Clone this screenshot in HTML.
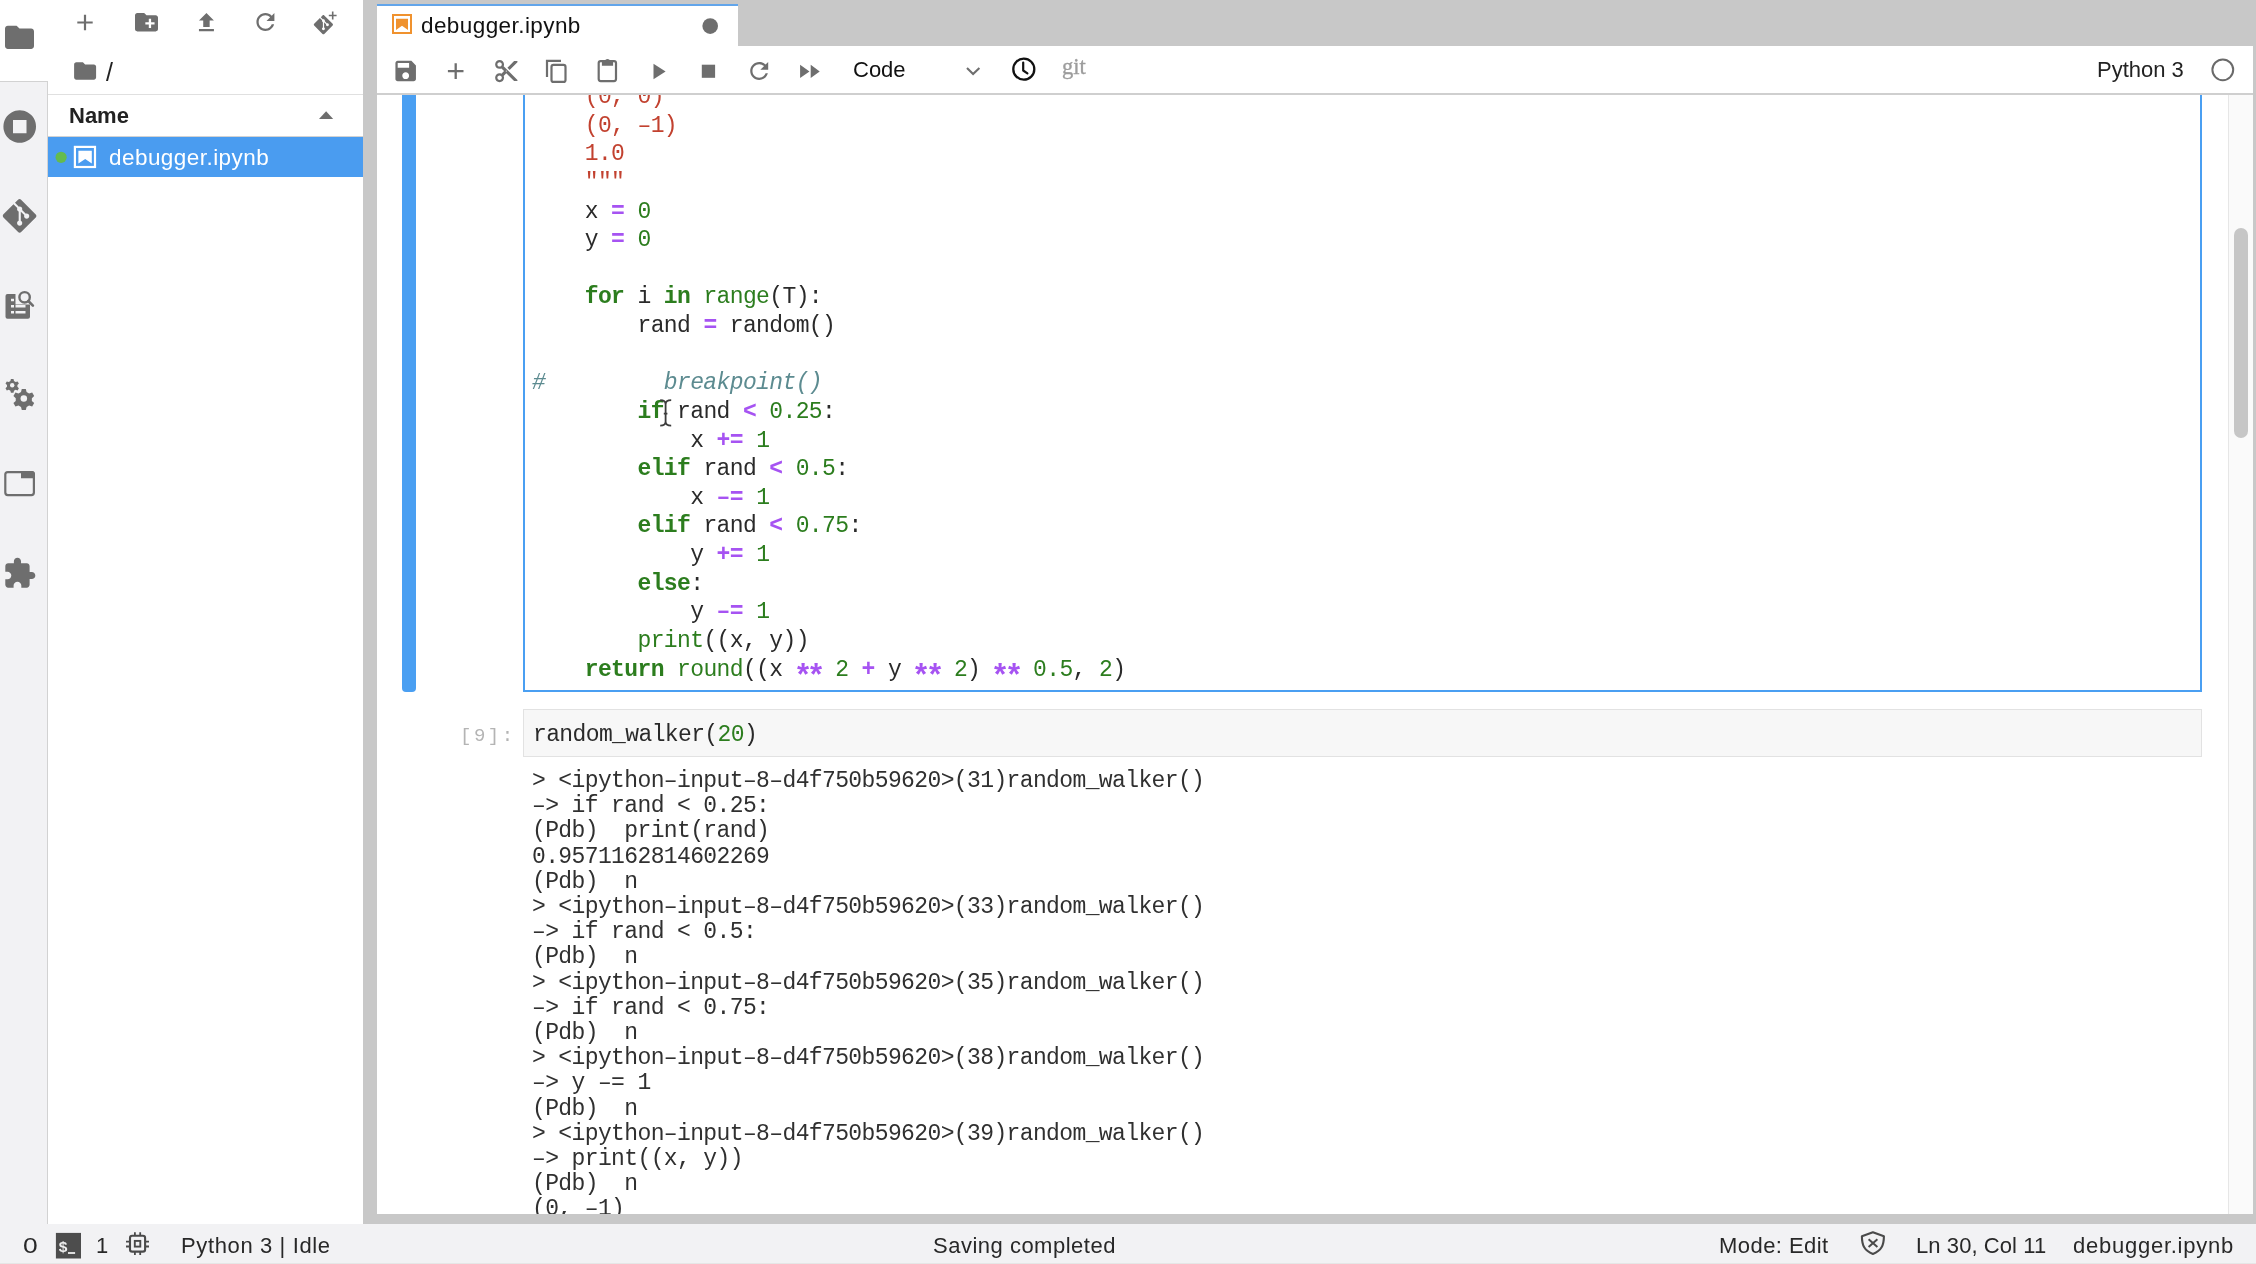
<!DOCTYPE html>
<html><head><meta charset="utf-8">
<style>
*{margin:0;padding:0;box-sizing:border-box}
html,body{width:2256px;height:1264px;overflow:hidden;background:#fff;font-family:"Liberation Sans",sans-serif;color:#212121}
.a{position:absolute}
#activity{left:0;top:0;width:48px;height:1224px;background:#f2f2f4;border-right:1px solid #d2d2d2}
#acttop{left:0;top:0;width:48px;height:82px;background:#fff;border-bottom:1px solid #d2d2d2}
#fb{left:48px;top:0;width:315px;height:1224px;background:#fff}
#split{left:363px;top:0;width:14px;height:1224px;background:#c8c8c8}
#tabbar{left:377px;top:0;width:1879px;height:46px;background:#c8c8c8}
#tab{left:377px;top:3.5px;width:361px;height:42.5px;background:#fff;border-top:2.5px solid #62a5ea}
#toolbar{left:377px;top:45.5px;width:1876px;height:49.5px;background:#fff;border-bottom:2px solid #cfcfcf;}
#nb{left:377px;top:95px;width:1876px;height:1119px;background:#fff;overflow:hidden}
#rstrip{left:2253px;top:0;width:3px;height:1224px;background:#c8c8c8}
#bstrip{left:377px;top:1214px;width:1879px;height:10px;background:#c8c8c8}
#status{left:0;top:1224px;width:2256px;height:40px;background:#f2f2f4;border-bottom:1px solid #e6e6e6}
.ico{fill:#6e6e6e}
.mono{font-family:"Liberation Mono",monospace;font-size:23px;letter-spacing:-0.62px;white-space:pre}
.code{line-height:28.62px;color:#2a2a2a}
.out{line-height:25.2px;color:#303030}
.k{color:#2c7d1e;font-weight:bold}
.o{color:#a653f2;font-weight:bold}
.n{color:#2c7d1e}
.s{color:#c2412f}
.ast{display:inline-block;transform-origin:50% 8px;transform:translateY(5.3px) scale(1.35,1.38)}
.c{color:#5c8b90;font-style:italic}
.b{color:#2c7d1e}
.st{font-size:22px;color:#282828;white-space:pre;will-change:transform}
.txt{white-space:pre;will-change:transform}
.mono{will-change:transform}
</style></head><body>
<div id="activity" class="a"></div>
<div id="acttop" class="a"></div>
<div id="fb" class="a">
  <div class="a" style="left:0;top:94px;width:315px;height:43px;border-top:1px solid #e0e0e0;border-bottom:1px solid #d2d2d2"></div>
  <div class="a txt" style="left:21px;top:103px;font-size:22px;font-weight:bold;color:#222">Name</div>
  <div class="a txt" style="left:57.5px;top:58px;font-size:25px;color:#222">/</div>
  <div class="a" style="left:0;top:137px;width:315px;height:40px;background:#4a9cf0"></div>
  <div class="a txt" style="left:61px;top:145px;font-size:22.5px;letter-spacing:0.45px;color:#fff">debugger.ipynb</div>
</div>
<div id="split" class="a"></div>
<div id="tabbar" class="a"></div>
<div id="tab" class="a"></div>
<div class="a txt" style="left:421px;top:13px;font-size:22.5px;letter-spacing:0.42px;color:#111">debugger.ipynb</div>
<div id="toolbar" class="a"></div>
<div class="a txt" style="left:853px;top:57px;font-size:22px;color:#111">Code</div>
<div class="a" style="left:1062px;top:54px;font-family:'Liberation Serif',serif;font-size:22.5px;color:#9c9c9c;-webkit-text-stroke:0.35px #9c9c9c;will-change:transform">git</div>
<div class="a txt" style="left:2097px;top:57px;font-size:22px;color:#222">Python 3</div>
<div id="nb" class="a">
  <!-- active cell collapser -->
  <div class="a" style="left:25px;top:-201px;width:14px;height:798px;background:#4a9ff2;border-radius:0 0 4px 4px"></div>
  <!-- editor border -->
  <div class="a" style="left:146px;top:-301px;width:1679px;height:898px;border:2px solid #4a9ff2"></div>
  <div class="a mono code" style="left:155px;top:-12px">    <span class="s">(0, 0)</span>
    <span class="s">(0, &#8211;1)</span>
    <span class="s">1.0</span>
    <span class="s">"""</span>
    x <span class="o">=</span> <span class="n">0</span>
    y <span class="o">=</span> <span class="n">0</span>

    <span class="k">for</span> i <span class="k">in</span> <span class="b">range</span>(T):
        rand <span class="o">=</span> random()

<span class="c">#         breakpoint()</span>
        <span class="k">if</span> rand <span class="o">&lt;</span> <span class="n">0.25</span>:
            x <span class="o">+=</span> <span class="n">1</span>
        <span class="k">elif</span> rand <span class="o">&lt;</span> <span class="n">0.5</span>:
            x <span class="o">&#8211;=</span> <span class="n">1</span>
        <span class="k">elif</span> rand <span class="o">&lt;</span> <span class="n">0.75</span>:
            y <span class="o">+=</span> <span class="n">1</span>
        <span class="k">else</span>:
            y <span class="o">&#8211;=</span> <span class="n">1</span>
        <span class="b">print</span>((x, y))
    <span class="k">return</span> <span class="b">round</span>((x <span class="o"><span class="ast">*</span><span class="ast">*</span></span> <span class="n">2</span> <span class="o">+</span> y <span class="o"><span class="ast">*</span><span class="ast">*</span></span> <span class="n">2</span>) <span class="o"><span class="ast">*</span><span class="ast">*</span></span> <span class="n">0.5</span>, <span class="n">2</span>)</div>
  <!-- cell 9 -->
  <div class="a mono" style="left:83px;top:630px;font-size:19px;color:#b4b4b4;letter-spacing:2.5px">[9]:</div>
  <div class="a" style="left:146px;top:614px;width:1679px;height:48px;background:#f7f7f7;border:1px solid #e2e2e2"></div>
  <div class="a mono code" style="left:156px;top:626px">random_walker(<span class="n">20</span>)</div>
  <div class="a mono out" style="left:155px;top:674px">&gt; &lt;ipython&#8211;input&#8211;8&#8211;d4f750b59620&gt;(31)random_walker()
&#8211;&gt; if rand &lt; 0.25:
(Pdb)  print(rand)
0.9571162814602269
(Pdb)  n
&gt; &lt;ipython&#8211;input&#8211;8&#8211;d4f750b59620&gt;(33)random_walker()
&#8211;&gt; if rand &lt; 0.5:
(Pdb)  n
&gt; &lt;ipython&#8211;input&#8211;8&#8211;d4f750b59620&gt;(35)random_walker()
&#8211;&gt; if rand &lt; 0.75:
(Pdb)  n
&gt; &lt;ipython&#8211;input&#8211;8&#8211;d4f750b59620&gt;(38)random_walker()
&#8211;&gt; y &#8211;= 1
(Pdb)  n
&gt; &lt;ipython&#8211;input&#8211;8&#8211;d4f750b59620&gt;(39)random_walker()
&#8211;&gt; print((x, y))
(Pdb)  n
(0, &#8211;1)</div>
  <!-- scrollbar -->
  <div class="a" style="left:1851px;top:0;width:25px;height:1120px;background:#fafafa;border-left:1px solid #e6e6e6"></div>
  <div class="a" style="left:1857px;top:133px;width:14px;height:210px;background:#c6c6c6;border-radius:7px"></div>
</div>
<div id="rstrip" class="a"></div>
<div id="bstrip" class="a"></div>
<div id="status" class="a">
  <div class="a st" style="left:23px;top:9px;font-size:22px;transform:scaleX(1.2);transform-origin:0 0">0</div>
  <div class="a" style="left:56px;top:9px;width:25px;height:25px;background:#555"></div>
  <div class="a st" style="left:96px;top:9px">1</div>
  <div class="a st" style="left:181px;top:9px;letter-spacing:0.63px">Python 3 | Idle</div>
  <div class="a st" style="left:933px;top:9px;letter-spacing:0.5px">Saving completed</div>
  <div class="a st" style="left:1719px;top:9px;letter-spacing:0.45px">Mode: Edit</div>
  <div class="a st" style="left:1916px;top:9px;letter-spacing:0.08px">Ln 30, Col 11</div>
  <div class="a st" style="left:2073px;top:9px;letter-spacing:0.75px">debugger.ipynb</div>
</div>
<svg class="a" style="left:0;top:0;will-change:transform" width="2256" height="1264" viewBox="0 0 2256 1264">
<g fill="#6e6e6e">
 <!-- activity: folder -->
 <path transform="translate(2.1,19.9) scale(1.45)" d="M10 4H4c-1.1 0-1.99.9-1.99 2L2 18c0 1.1.9 2 2 2h16c1.1 0 2-.9 2-2V8c0-1.1-.9-2-2-2h-8l-2-2z"/>
 <!-- running -->
 <path fill-rule="evenodd" d="M19.7 110.2a16.3 16.3 0 1 0 0.01 0zM13 120v13.3h13.5V120z"/>
 <!-- git -->
 <path transform="translate(2.8,199.1) scale(1.4)" d="M23.546 10.93L13.067.452c-.604-.603-1.582-.603-2.188 0L8.708 2.627l2.76 2.76c.645-.215 1.379-.07 1.889.441.516.515.658 1.258.438 1.9l2.658 2.66c.645-.223 1.387-.078 1.9.435.721.72.721 1.884 0 2.604-.719.719-1.881.719-2.6 0-.539-.541-.674-1.337-.404-1.996L12.86 8.955v6.525c.176.086.342.203.488.348.713.721.713 1.883 0 2.6-.719.721-1.889.721-2.609 0-.719-.719-.719-1.879 0-2.598.182-.18.387-.316.605-.406V8.835c-.217-.091-.424-.222-.6-.401-.545-.545-.676-1.342-.396-2.009L7.636 3.7.45 10.881c-.6.605-.6 1.584 0 2.189l10.48 10.477c.604.604 1.582.604 2.186 0l10.43-10.43c.605-.603.605-1.582 0-2.187"/>
 <!-- palette: doc with rows + magnifier -->
 <path fill-rule="evenodd" d="M7.5 293.9h8v10.6h14.5v12.3a2 2 0 0 1-2 2H7.5a2 2 0 0 1-2-2V295.9a2 2 0 0 1 2-2zM11 298.7h3v2.6h-3zM11 305h3v2.6h-3zM15.5 305h10v2.6h-10zM11 311h3v2.6h-3zM15.5 311h10v2.6h-10z"/>
 <circle cx="24.6" cy="297.3" r="5.2" fill="none" stroke="#6e6e6e" stroke-width="2.4"/>
 <path d="M28.3 301l4.6 4.6" stroke="#6e6e6e" stroke-width="2.6" stroke-linecap="round"/>
 <!-- gears -->
 <g transform="translate(12.2,385.3)"><path d="M-1.3-6.2h2.6l.5 2 1.6.9 2-.6 1.3 2.2-1.5 1.4v1.8l1.5 1.4-1.3 2.2-2-.6-1.6.9-.5 2h-2.6l-.5-2-1.6-.9-2 .6-1.3-2.2 1.5-1.4v-1.8l-1.5-1.4 1.3-2.2 2 .6 1.6-.9z" fill-rule="evenodd"/><circle r="2.2" fill="#f2f2f4"/></g>
 <g transform="translate(23.8,398.6) scale(1.55)"><path d="M-1.3-6.2h2.6l.5 2 1.6.9 2-.6 1.3 2.2-1.5 1.4v1.8l1.5 1.4-1.3 2.2-2-.6-1.6.9-.5 2h-2.6l-.5-2-1.6-.9-2 .6-1.3-2.2 1.5-1.4v-1.8l-1.5-1.4 1.3-2.2 2 .6 1.6-.9z"/><circle r="2.1" fill="#f2f2f4"/></g>
 <!-- tabs -->
 <rect x="5.3" y="472.1" width="28.6" height="23" rx="2.5" fill="none" stroke="#6e6e6e" stroke-width="2.2"/>
 <path d="M21 471h10.9a3 3 0 0 1 3 3v4.3H21z"/>
 <!-- puzzle -->
 <path transform="translate(2.44,556.2) scale(1.43)" d="M20.5 11H19V7c0-1.1-.9-2-2-2h-4V3.5C13 2.12 11.88 1 10.5 1S8 2.12 8 3.5V5H4c-1.1 0-1.99.9-1.99 2v3.8H3.5c1.49 0 2.7 1.210 2.7 2.7s-1.21 2.7-2.7 2.7H2V20c0 1.1.9 2 2 2h3.8v-1.5c0-1.49 1.21-2.7 2.7-2.7 1.49 0 2.7 1.21 2.7 2.7V22H17c1.1 0 2-.9 2-2v-4h1.5c1.38 0 2.5-1.120 2.5-2.5S21.88 11 20.5 11z"/>
 <!-- filebrowser toolbar -->
 <path transform="translate(77.3,14.8) scale(1.1)" d="M14 8h-6v6h-2v-6H0V6h6V0h2v6h6v2z"/>
 <path transform="translate(132.7,8.4) scale(1.15)" d="M20 6h-8l-2-2H4c-1.11 0-1.99.89-1.99 2L2 18c0 1.11.89 2 2 2h16c1.11 0 2-.89 2-2V8c0-1.11-.89-2-2-2zm-1 8h-3v3h-2v-3h-3v-2h3V9h2v3h3v2z"/>
 <path transform="translate(193.6,9.8) scale(1.07)" d="M9 16h6v-6h4l-7-7-7 7h4zm-4 2h14v2H5z"/>
 <path transform="translate(251.9,8.6) scale(1.125)" d="M17.65 6.35C16.2 4.9 14.21 4 12 4c-4.42 0-7.99 3.58-7.99 8s3.57 8 7.99 8c3.730 0 6.84-2.55 7.73-6h-2.08c-.82 2.33-3.04 4-5.65 4-3.31 0-6-2.690-6-6s2.69-6 6-6c1.66 0 3.14.69 4.22 1.78L13 11h7V4l-2.35 2.35z"/>
 <path transform="translate(313.8,15.1) scale(0.8)" d="M23.546 10.93L13.067.452c-.604-.603-1.582-.603-2.188 0L8.708 2.627l2.76 2.76c.645-.215 1.379-.07 1.889.441.516.515.658 1.258.438 1.9l2.658 2.66c.645-.223 1.387-.078 1.9.435.721.72.721 1.884 0 2.604-.719.719-1.881.719-2.6 0-.539-.541-.674-1.337-.404-1.996L12.86 8.955v6.525c.176.086.342.203.488.348.713.721.713 1.883 0 2.6-.719.721-1.889.721-2.609 0-.719-.719-.719-1.879 0-2.598.182-.18.387-.316.605-.406V8.835c-.217-.091-.424-.222-.6-.401-.545-.545-.676-1.342-.396-2.009L7.636 3.7.45 10.881c-.6.605-.6 1.584 0 2.189l10.48 10.477c.604.604 1.582.604 2.186 0l10.43-10.43c.605-.603.605-1.582 0-2.187"/>
 <path d="M332.7 11.6v7.8M328.8 15.5h7.8" stroke="#6e6e6e" stroke-width="1.6"/>
 <!-- breadcrumb folder -->
 <path transform="translate(71.9,57.8) scale(1.1)" d="M10 4H4c-1.1 0-1.99.9-1.99 2L2 18c0 1.1.9 2 2 2h16c1.1 0 2-.9 2-2V8c0-1.1-.9-2-2-2h-8l-2-2z"/>
 <!-- sort arrow -->
 <path d="M319 119h14.2l-7.1-7.7z"/>
 <!-- tab dot -->
 <circle cx="710.2" cy="26.1" r="7.8"/>
 <!-- notebook toolbar -->
 <path transform="translate(392,57.4) scale(1.14)" d="M17 3H5c-1.11 0-2 .9-2 2v14c0 1.1.89 2 2 2h14c1.1 0 2-.9 2-2V7l-4-4zm-5 16c-1.66 0-3-1.34-3-3s1.34-3 3-3 3 1.34 3 3-1.34 3-3 3zm3-10H5V5h10v4z"/>
 <path d="M455.7 63.3v15.8M447.9 71.2h15.6" stroke="#6e6e6e" stroke-width="2.3"/>
 <path transform="translate(492.9,57.7) scale(1.115)" d="M9.64 7.64c.23-.5.36-1.05.36-1.64 0-2.21-1.79-4-4-4S2 3.79 2 6s1.79 4 4 4c.59 0 1.14-.13 1.64-.36L10 12l-2.36 2.36C7.14 14.13 6.59 14 6 14c-2.21 0-4 1.79-4 4s1.79 4 4 4 4-1.79 4-4c0-.59-.13-1.14-.36-1.64L12 14l7 7h3v-1L9.64 7.640zM6 8c-1.1 0-2-.89-2-2s.9-2 2-2 2 .89 2 2-.9 2-2 2zm0 12c-1.1 0-2-.89-2-2s.9-2 2-2 2 .89 2 2-.9 2-2 2zm6-7.5c-.28 0-.5-.22-.5-.5s.22-.5.5-.5.5.22.5.5-.22.5-.5.5zM19 3l-6 6 2 2 7-7V3z"/>
 <path d="M547 77V60.8h14" fill="none" stroke="#6e6e6e" stroke-width="2.2"/>
 <rect x="551.5" y="64.9" width="14" height="17" rx="2" fill="none" stroke="#6e6e6e" stroke-width="2.2"/>
 <rect x="598.7" y="61.1" width="17.3" height="20" rx="2" fill="none" stroke="#6e6e6e" stroke-width="2.2"/>
 <path d="M601.9 61.5h3.2a2.4 2.4 0 0 1 4.8 0h3.2v4.2h-11.2z"/>
 <path d="M653.5 63.8v15.5l12.1-7.75z"/>
 <rect x="701.8" y="64.7" width="13.3" height="13.1"/>
 <path transform="translate(745.7,57.4) scale(1.125)" d="M17.65 6.35C16.2 4.9 14.21 4 12 4c-4.42 0-7.99 3.58-7.99 8s3.57 8 7.99 8c3.730 0 6.84-2.55 7.73-6h-2.08c-.82 2.33-3.04 4-5.65 4-3.31 0-6-2.690-6-6s2.69-6 6-6c1.66 0 3.14.69 4.22 1.78L13 11h7V4l-2.35 2.35z"/>
 <path d="M800.1 64.7v13.4l9.4-6.7zM810.7 64.7v13.4l9-6.7z"/>
 <path d="M967 68l6.1 6 6.3-6" fill="none" stroke="#6e6e6e" stroke-width="2.1"/>
</g>
<!-- notebook icon in tab -->
<rect x="393" y="15" width="18" height="18" fill="none" stroke="#f0922e" stroke-width="2"/>
<path d="M396 18.8h12v11.3l-6-4.4-6 4.4z" fill="#f0922e"/>
<!-- notebook icon in filebrowser -->
<rect x="74.9" y="146.9" width="20.1" height="20.1" fill="none" stroke="#fff" stroke-width="2.2"/>
<path d="M78.4 150.8h13.4v12.7l-6.6-4.4-6.8 4.4z" fill="#fff"/>
<circle cx="61.1" cy="157.3" r="5.6" fill="#64bb4e"/>
<!-- clock -->
<circle cx="1023.8" cy="69.2" r="10.5" fill="none" stroke="#111" stroke-width="2.3"/>
<path d="M1023.2 62.5v8l4.2 2.9" fill="none" stroke="#111" stroke-width="2.2" stroke-linecap="round" stroke-linejoin="round"/>
<!-- kernel circle -->
<circle cx="2222.8" cy="69.8" r="10.4" fill="none" stroke="#6a6a6a" stroke-width="2"/>
<!-- status icons -->
<rect x="55.9" y="1232.9" width="25.1" height="25.6" fill="#4d4d4d"/>
<path d="M68 1252.1h7.1v1.8H68z" fill="#eee"/>
<text x="58.8" y="1252.2" font-family="Liberation Sans" font-weight="bold" font-size="15.5" fill="#eee">$</text>
<g fill="none" stroke="#4a4a4a">
 <rect x="130" y="1235.8" width="15.1" height="15.8" rx="2.2" stroke-width="2.1"/>
 <rect x="134.8" y="1240.9" width="5.5" height="5.7" stroke-width="1.9"/>
 <path d="M134.9 1232.3v3M140.2 1232.3v3M134.9 1252v3M140.2 1252v3M126 1241.7h3.5M126 1246.5h3.5M145.5 1241.7h3.5M145.5 1246.5h3.5" stroke-width="1.8"/>
 <path d="M1872.9 1232.2l-11 4.1c0 9 2.5 14.5 11 17.7 8.5-3.2 11-8.7 11-17.7z" stroke-width="2.1" stroke-linejoin="round"/>
 <path d="M1868.6 1239.3l8.8 7.6M1877.4 1239.3l-8.8 7.6" stroke-width="2"/>
</g>
<path d="M660.2 400.2c3.5 0 5.4 1.3 5.4 4.2c0-2.9 1.9-4.2 5.6-4.2M665.6 403.5v19M660.2 425.6c3.5 0 5.4-1.3 5.4-4.2c0 2.9 1.9 4.2 5.6 4.2M663.8 413.6h3.6" fill="none" stroke="#3c3c3c" stroke-width="1.8"/>
</svg>
</body></html>
